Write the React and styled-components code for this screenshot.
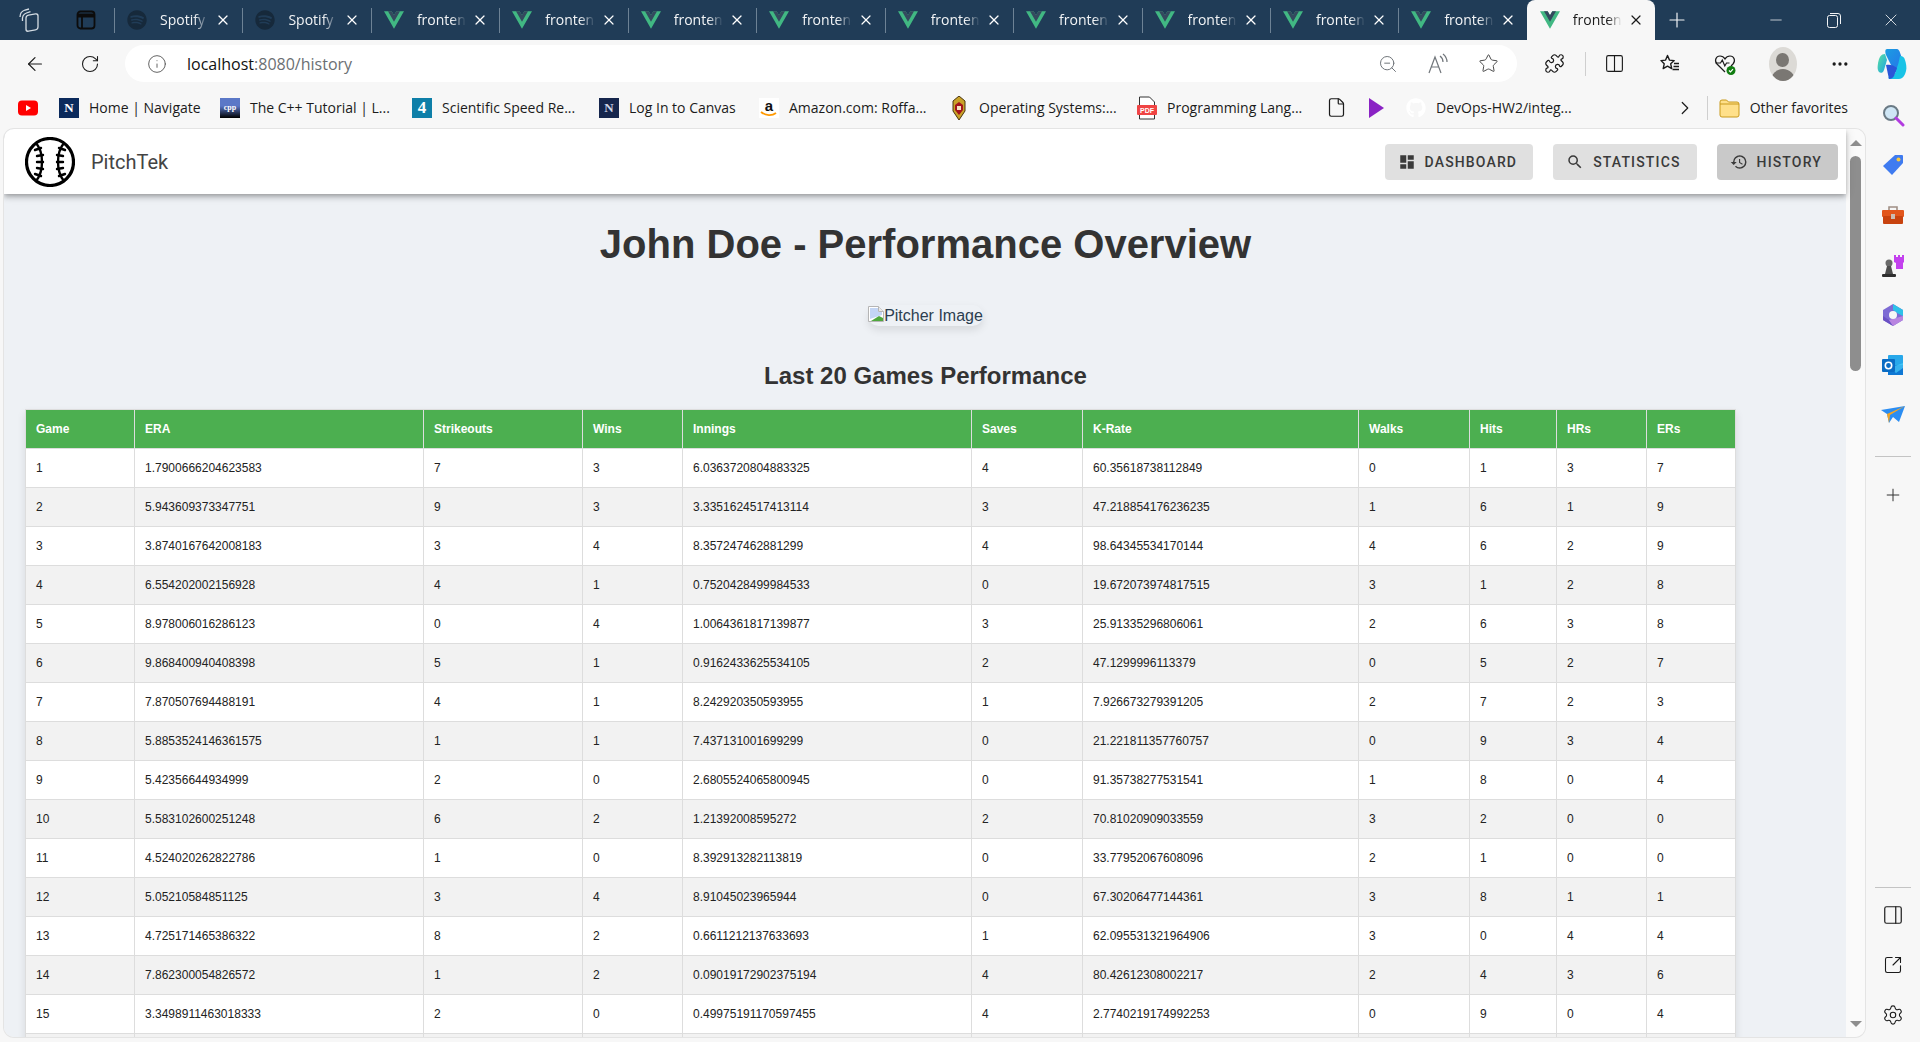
import styled, { createGlobalStyle } from "styled-components";
import { FaSpotify, FaGithub } from "react-icons/fa";
import { MdDashboard, MdSearch, MdHistory } from "react-icons/md";
import {
  ArrowLeft,
  RotateCw,
  Info,
  ZoomOut,
  Star,
  Puzzle,
  Columns2,
  Ellipsis,
  X,
  Plus,
  Minus,
  ChevronRight,
  File,
  PanelRight,
  SquareArrowOutUpRight,
  Settings,
} from "lucide-react";

const GlobalStyle = createGlobalStyle`
  html, body {
    margin: 0;
    padding: 0;
    height: 100%;
    overflow: hidden;
  }
  * {
    box-sizing: border-box;
  }
`;

const Browser = styled.div`
  width: 100vw;
  height: 100vh;
  display: flex;
  flex-direction: column;
  overflow: hidden;
  background-color: #f7f7f7;
  font-family: "Open Sans", sans-serif;
  color: #1b1b1b;
`;

const TabStrip = styled.div`
  height: 40px;
  flex: none;
  display: flex;
  align-items: stretch;
  background-color: #203c57;
`;

const StripIcon = styled.div`
  width: 57px;
  display: flex;
  align-items: center;
  justify-content: center;
`;

const Tab = styled.div`
  width: 128.45px;
  flex: none;
  display: flex;
  align-items: center;
  gap: 13px;
  padding: 0 11px 1px 13px;
  color: #f2f4f6;
  position: relative;

  &::before {
    content: "";
    position: absolute;
    left: 0;
    top: 8px;
    bottom: 7px;
    width: 1px;
    background-color: #6d8295;
  }
`;

const TabTitle = styled.span`
  flex: 1;
  margin-right: -7px;
  overflow: hidden;
  white-space: nowrap;
  font-size: 14px;
  -webkit-mask-image: linear-gradient(to right, #000 70%, transparent 100%);
  mask-image: linear-gradient(to right, #000 70%, transparent 100%);
`;

const ActiveTab = styled(Tab)`
  background-color: #f7f7f7;
  color: #1b1b1b;
  border-radius: 8px 8px 0 0;

  &::before {
    display: none;
  }
`;

const NewTab = styled.div`
  width: 44px;
  display: flex;
  align-items: center;
  justify-content: center;
`;

const WindowButtons = styled.div`
  margin-left: auto;
  display: flex;
`;

const WindowButton = styled.div`
  width: 57.5px;
  display: flex;
  align-items: center;
  justify-content: center;
`;

const Toolbar = styled.div`
  height: 45px;
  flex: none;
  display: flex;
  align-items: center;
  padding: 5px 0 3px 7.5px;
`;

const ToolSlot = styled.div`
  width: ${(props) => props.$width || 55}px;
  height: 37px;
  flex: none;
  display: flex;
  align-items: center;
  justify-content: center;
`;

const AddressBar = styled.div`
  width: 1392px;
  height: 37px;
  flex: none;
  margin-left: 7.5px;
  display: flex;
  align-items: center;
  padding: 0 18px 0 22px;
  border-radius: 19px;
  background-color: #fff;
`;

const Url = styled.div`
  margin-left: 20px;
  font-size: 16px;
  color: #111;

  span {
    color: #6b6f73;
  }
`;

const AddressTools = styled.div`
  margin-left: auto;
  display: flex;
  align-items: center;
  gap: 29px;
`;

const ToolGroup = styled.div`
  margin-left: 9.5px;
  display: flex;
  align-items: center;
`;

const ToolDivider = styled.div`
  width: 1px;
  height: 24px;
  flex: none;
  background-color: #cfcfcf;
`;

const ToolbarDivider = styled(ToolDivider)`
  margin: 0 1px 0 3.5px;
`;

const Avatar = styled.div`
  width: 28px;
  height: 34px;
  border-radius: 50%;
  overflow: hidden;
  background-color: #dcdad6;
  display: flex;
  flex-direction: column;
  align-items: center;
`;

const AvatarHead = styled.div`
  width: 13px;
  height: 15px;
  margin-top: 6px;
  border-radius: 50%;
  background-color: #7a7773;
`;

const AvatarBody = styled.div`
  width: 24px;
  height: 12px;
  margin-top: 2px;
  border-radius: 12px 12px 0 0;
  background-color: #7a7773;
`;

const Below = styled.div`
  flex: 1;
  min-height: 0;
  display: flex;
`;

const MainColumn = styled.div`
  width: 1866px;
  flex: none;
  display: flex;
  flex-direction: column;
`;

const Bookmarks = styled.div`
  height: 44px;
  flex: none;
  display: flex;
  align-items: center;
  gap: 21px;
  padding: 1px 18px 0 18px;
  font-size: 14px;
`;

const Bookmark = styled.div`
  display: flex;
  align-items: center;
  gap: 10px;
  white-space: nowrap;
`;

const BookmarkTitle = styled.span`
  width: ${(props) => (props.$width ? `${props.$width}px` : "auto")};
`;

const BookmarksEnd = styled.div`
  margin-left: auto;
  display: flex;
  align-items: center;
  gap: 11px;
`;

const Favicon = styled.div`
  width: 20px;
  height: 20px;
  flex: none;
  display: flex;
  flex-direction: column;
  align-items: center;
  justify-content: center;
  background: ${(props) => props.$bg};
  color: ${(props) => props.$color};
  font-family: "Liberation Serif", serif;
  font-size: ${(props) => props.$size}px;
  font-weight: 700;
  line-height: 1;
`;

const AmazonLetter = styled.span`
  font-family: "Liberation Sans", sans-serif;
  margin-bottom: -2px;
`;

const Workspace = styled.div`
  flex: 1;
  min-height: 0;
  display: flex;
  padding: 0 0 5px 4px;
`;

const WebView = styled.div`
  width: 1861px;
  flex: none;
  display: flex;
  overflow: hidden;
  border-radius: 10px;
  box-shadow: 0 0 0 1px #e4e4e4;
`;

const Page = styled.div`
  width: 1842px;
  flex: none;
  display: flex;
  flex-direction: column;
  background-color: #eef1f5;
`;

const AppBar = styled.header`
  height: 65px;
  flex: none;
  display: flex;
  align-items: center;
  justify-content: space-between;
  padding: 0 8px 0 21px;
  background-color: #fff;
  position: relative;
  box-shadow: 0 2px 4px -1px rgba(0, 0, 0, 0.2), 0 4px 5px rgba(0, 0, 0, 0.14),
    0 1px 10px rgba(0, 0, 0, 0.12);
`;

const Brand = styled.div`
  display: flex;
  align-items: center;
  gap: 16px;
`;

const BrandName = styled.div`
  font-family: Roboto, sans-serif;
  font-size: 20px;
  color: #444;
`;

const Nav = styled.nav`
  display: flex;
  gap: 20px;
`;

const NavButton = styled.button`
  height: 36px;
  display: flex;
  align-items: center;
  gap: 9px;
  padding: 0 16px 0 13px;
  border: none;
  border-radius: 4px;
  background-color: ${(props) => (props.$active ? "#c9c9c9" : "#e0e0e0")};
  color: #3a3a3a;
  font-family: Roboto, sans-serif;
  font-size: 14px;
  font-weight: 500;
  letter-spacing: 1.15px;
  text-transform: uppercase;
`;

const Content = styled.main`
  flex: 1;
  min-height: 0;
  display: flex;
  flex-direction: column;
  align-items: center;
  padding: 27px 20px 0 21px;
  overflow: hidden;
  font-family: "Liberation Sans", Arial, sans-serif;
`;

const Title = styled.h1`
  margin: 0 0 38px;
  font-size: 40px;
  line-height: 46px;
  font-weight: 700;
  color: #333;
`;

const PitcherImage = styled.div`
  display: flex;
  align-items: flex-start;
  height: 24px;
  padding-top: 1px;
  border-radius: 12px;
  font-size: 16px;
  line-height: 20px;
  color: #2c3e50;
  box-shadow: 0 4px 8px rgba(0, 0, 0, 0.1);
`;

const SubTitle = styled.h2`
  margin: 36px 0 20px;
  font-size: 24px;
  line-height: 27px;
  font-weight: 700;
  color: #333;
`;

const GamesTable = styled.table`
  width: 1710px;
  flex: none;
  align-self: flex-start;
  table-layout: fixed;
  border-collapse: collapse;
  font-size: 12px;
  background-color: #fff;
  box-shadow: 0 4px 8px rgba(0, 0, 0, 0.1);

  th,
  td {
    padding: 12px 10px;
    line-height: 14px;
    text-align: left;
    border: 1px solid #ddd;
    color: #222;
  }

  th {
    background-color: #4caf50;
    color: #fff;
    font-weight: 700;
  }

  tbody tr:nth-child(even) td {
    background-color: #f2f2f2;
  }
`;

const GameCol = styled.col`
  width: ${(props) => props.$width}px;
`;

const ScrollTrack = styled.div`
  width: 19px;
  flex: none;
  display: flex;
  flex-direction: column;
  align-items: center;
  padding: 11px 0 10px;
  background-color: #fafafa;
`;

const ScrollUp = styled.div`
  width: 0;
  height: 0;
  border-left: 6px solid transparent;
  border-right: 6px solid transparent;
  border-bottom: 6px solid #8e8e8e;
`;

const ScrollThumb = styled.div`
  width: 11px;
  height: 215px;
  margin-top: 10px;
  border-radius: 6px;
  background-color: #8e8e8e;
`;

const ScrollDown = styled.div`
  margin-top: auto;
  width: 0;
  height: 0;
  border-left: 6px solid transparent;
  border-right: 6px solid transparent;
  border-top: 6px solid #8e8e8e;
`;

const Rail = styled.aside`
  flex: 1;
  display: flex;
  flex-direction: column;
  align-items: center;
  padding: 5px 0 2px;
`;

const RailGroup = styled.div`
  display: flex;
  flex-direction: column;
`;

const RailItem = styled.div`
  width: 54px;
  height: 50px;
  flex: none;
  display: flex;
  align-items: center;
  justify-content: center;
`;

const RailDivider = styled.div`
  width: 36px;
  height: 1px;
  flex: none;
  margin: 16px 0 13px;
  background-color: #c4c4c4;
`;

const RailBottomDivider = styled(RailDivider)`
  margin: 0 0 2px;
`;

const RailBottom = styled.div`
  margin-top: auto;
  display: flex;
  flex-direction: column;
  align-items: center;
`;

const columns = [
  { name: "Game", width: 109 },
  { name: "ERA", width: 289 },
  { name: "Strikeouts", width: 159 },
  { name: "Wins", width: 100 },
  { name: "Innings", width: 289 },
  { name: "Saves", width: 111 },
  { name: "K-Rate", width: 276 },
  { name: "Walks", width: 111 },
  { name: "Hits", width: 87 },
  { name: "HRs", width: 90 },
  { name: "ERs", width: 89 },
];

const games = [
  [1, "1.7900666204623583", 7, 3, "6.0363720804883325", 4, "60.35618738112849", 0, 1, 3, 7],
  [2, "5.943609373347751", 9, 3, "3.3351624517413114", 3, "47.218854176236235", 1, 6, 1, 9],
  [3, "3.8740167642008183", 3, 4, "8.357247462881299", 4, "98.64345534170144", 4, 6, 2, 9],
  [4, "6.554202002156928", 4, 1, "0.7520428499984533", 0, "19.672073974817515", 3, 1, 2, 8],
  [5, "8.978006016286123", 0, 4, "1.0064361817139877", 3, "25.91335296806061", 2, 6, 3, 8],
  [6, "9.868400940408398", 5, 1, "0.9162433625534105", 2, "47.1299996113379", 0, 5, 2, 7],
  [7, "7.870507694488191", 4, 1, "8.242920350593955", 1, "7.926673279391205", 2, 7, 2, 3],
  [8, "5.8853524146361575", 1, 1, "7.437131001699299", 0, "21.221811357760757", 0, 9, 3, 4],
  [9, "5.42356644934999", 2, 0, "2.6805524065800945", 0, "91.35738277531541", 1, 8, 0, 4],
  [10, "5.583102600251248", 6, 2, "1.21392008595272", 2, "70.81020909033559", 3, 2, 0, 0],
  [11, "4.524020262822786", 1, 0, "8.392913282113819", 0, "33.77952067608096", 2, 1, 0, 0],
  [12, "5.05210584851125", 3, 4, "8.91045023965944", 0, "67.30206477144361", 3, 8, 1, 1],
  [13, "4.725171465386322", 8, 2, "0.6611212137633693", 1, "62.095531321964906", 3, 0, 4, 4],
  [14, "7.862300054826572", 1, 2, "0.09019172902375194", 4, "80.42612308002217", 2, 4, 3, 6],
  [15, "3.3498911463018333", 2, 0, "0.49975191170597455", 4, "2.7740219174992253", 0, 9, 0, 4],
  ["", "", "", "", "", "", "", "", "", "", ""],
];

function VueLogo() {
  return (
    <svg width="20" height="18" viewBox="0 0 261.76 226.69">
      <path d="M161.096.001l-30.225 52.351L100.647.001H-.005l130.876 226.688L261.749.001z" fill="#41b883" />
      <path d="M161.096.001l-30.225 52.351L100.647.001H52.346l78.525 136.01L209.398.001z" fill="#34495e" />
    </svg>
  );
}

function WorkspacesIcon() {
  return (
    <svg width="22" height="24" viewBox="0 0 22 24" fill="none" stroke="#d5dde4" strokeWidth="1.3">
      <path d="M2 9c0-3 2-6 5-7l4-1" />
      <path d="M4.5 13c-.5-4 1-7 4-8l4-1.3" />
      <rect x="8" y="6" width="12" height="16" rx="2.5" transform="skewY(-10) translate(0 3)" />
    </svg>
  );
}

function VerticalTabsIcon() {
  return (
    <svg width="20" height="20" viewBox="0 0 20 20" fill="none" stroke="#0c0c0c" strokeWidth="1.8">
      <rect x="1.5" y="1.5" width="17" height="17" rx="3" />
      <path d="M1.5 5.5h17" strokeWidth="4" />
      <path d="M6 6v12" />
    </svg>
  );
}

function FavoritesIcon() {
  return (
    <svg width="22" height="22" viewBox="0 0 22 22" fill="none" stroke="#1b1b1b" strokeWidth="1.4" strokeLinejoin="round">
      <path d="M8.5 2.5l2 4.6 4.7.5-3.5 3.2 1 4.8-4.2-2.5-4.3 2.5 1-4.8L2 7.6l4.6-.5z" />
      <path d="M15 10.5h5M14.5 13.5h5.5M13.5 16.5h6.5" />
    </svg>
  );
}

function HealthIcon() {
  return (
    <svg width="24" height="24" viewBox="0 0 24 24" fill="none">
      <path d="M12 20 4 12C1 8.5 3 4 7 4c2.3 0 4 1.3 5 3 1-1.7 2.7-3 5-3 4 0 6 4.5 3 8l-2 2" stroke="#1b1b1b" strokeWidth="1.2" />
      <path d="M2.5 11h5l1.8-3 2.5 6 1.7-3h3" stroke="#1b1b1b" strokeWidth="1.2" />
      <circle cx="18" cy="18.5" r="4.5" fill="#107c10" />
      <path d="M16 18.5l1.5 1.5 2.5-2.8" stroke="#fff" strokeWidth="1.2" />
    </svg>
  );
}

function ReadAloudIcon() {
  return (
    <svg width="22" height="22" viewBox="0 0 22 22" fill="none" stroke="#70757a" strokeWidth="1.2">
      <path d="M2 20 8 4l6 16M4.5 14h7" />
      <path d="M13 3c2 1.5 3 3.5 3 6M16 1c2.5 2 4 4.5 4 8" />
    </svg>
  );
}

function CopilotIcon() {
  return (
    <svg width="30" height="34" viewBox="0 0 30 34">
      <defs>
        <linearGradient id="copA" x1="0" y1="0" x2="1" y2="1">
          <stop offset="0" stopColor="#1b9de2" />
          <stop offset="1" stopColor="#2870ea" />
        </linearGradient>
        <linearGradient id="copB" x1="0" y1="0" x2="1" y2="1">
          <stop offset="0" stopColor="#5be0a0" />
          <stop offset="1" stopColor="#19a3e6" />
        </linearGradient>
      </defs>
      <path d="M10 2h9c3 0 3.5 2 4.5 5l4 12c1 3-1 6-4 6h-6L9 8c-1-3-1-6 1-6z" fill="url(#copA)" />
      <path d="M8 7C4 7 2.5 10 1.5 14S0 23 2 25c1.5 1.5 4 1 5-2l3-10z" fill="url(#copB)" />
      <path d="M23 9c3 0 4 1 5 4s2 8 1 11c-1 4-3 8-7 8h-9c-2 0-2-2-.5-3 3 0 5-1 6-4l3-9z" fill="#19c3e6" />
      <path d="M9 18c3-1 8 0 11 3l-3 8c-1 2-3 3-5 3z" fill="#2a56d8" />
    </svg>
  );
}

function BaseballLogo() {
  return (
    <svg width="50" height="50" viewBox="0 0 50 50" fill="#fff" stroke="#000" strokeWidth="3.2" strokeLinecap="round">
      <ellipse cx="25" cy="25" rx="23.5" ry="23.5" />
      <path d="M11 6c5 6 6 12 6 19s-1 13-6 19" fill="none" strokeWidth="2.4" />
      <path d="M39 6c-5 6-6 12-6 19s1 13 6 19" fill="none" strokeWidth="2.4" />
      <path d="M10 13l6-2M12 19l6-1M12 25h6M12 31l6 1M10 37l6 2M40 13l-6-2M38 19l-6-1M38 25h-6M38 31l-6 1M40 37l-6 2" strokeWidth="2.4" />
    </svg>
  );
}

function BrokenImageIcon() {
  return (
    <svg width="16" height="16" viewBox="0 0 16 16">
      <path d="M0.5 0.5h10l5 5v10h-15z" fill="#fff" stroke="#b5b5b5" />
      <path d="M10.5 0.5v5h5" fill="#e8e8e8" stroke="#b5b5b5" />
      <path d="M2 2h8v4h4v3L8 11l-6 2z" fill="#c3d5f4" />
      <path d="M3 15 11 10l4 2v3z" fill="#4fa83d" />
    </svg>
  );
}

function FolderIcon() {
  return (
    <svg width="21" height="20" viewBox="0 0 21 20">
      <path d="M1 4a2 2 0 0 1 2-2h4.5l2 2H18a2 2 0 0 1 2 2v11a2 2 0 0 1-2 2H3a2 2 0 0 1-2-2z" fill="#ffe08a" stroke="#c99a1c" />
      <path d="M1 6h19" stroke="#c99a1c" />
    </svg>
  );
}

function YoutubeIcon() {
  return (
    <svg width="20" height="16" viewBox="0 0 20 16">
      <rect width="20" height="15" y="0.5" rx="4" fill="#f00" />
      <path d="M8 5l5 3-5 3z" fill="#fff" />
    </svg>
  );
}

function AmazonIcon() {
  return (
    <Favicon $bg="#fff" $color="#111" $size={15}>
      <AmazonLetter>a</AmazonLetter>
      <svg width="20" height="6" viewBox="0 0 20 6">
        <path d="M2 1c5 4 11 4 15 1" fill="none" stroke="#f90" strokeWidth="1.8" />
      </svg>
    </Favicon>
  );
}

function CrestIcon() {
  return (
    <svg width="20" height="24" viewBox="-3 0 20 24">
      <path d="M7 0l6 5v10l-6 9-6-9V5z" fill="#c9a227" stroke="#4a3410" />
      <path d="M7 6l4 3v5l-4 5-4-5V9z" fill="#a3141c" />
      <path d="M5 10h4v4H5z" fill="#f4e4c1" />
    </svg>
  );
}

function PdfIcon() {
  return (
    <svg width="20" height="24" viewBox="0 0 20 24">
      <path d="M2.5 1h10l5 5v17h-15z" fill="#fff" stroke="#333" />
      <rect y="9" width="20" height="10" rx="1" fill="#ef4444" />
      <text x="10" y="17" textAnchor="middle" fontSize="7" fontWeight="700" fontFamily="Liberation Sans, sans-serif" fill="#fff">PDF</text>
    </svg>
  );
}

function PlayIcon() {
  return (
    <svg width="17" height="20" viewBox="0 0 17 20">
      <path d="M1 0l15 10L1 20z" fill="#8a22c4" />
    </svg>
  );
}

function SearchAppIcon() {
  return (
    <svg width="24" height="24" viewBox="0 0 24 24">
      <circle cx="10" cy="10" r="7" fill="#cfe6f5" stroke="#6a7a85" strokeWidth="2" />
      <path d="M15 15l7 7" stroke="#b23be0" strokeWidth="3" strokeLinecap="round" />
    </svg>
  );
}

function TagIcon() {
  return (
    <svg width="24" height="24" viewBox="0 0 24 24">
      <path d="M14 2h7a1 1 0 0 1 1 1v7L11 22 2 13z" fill="#3f7bf0" />
      <circle cx="17.5" cy="6.5" r="2" fill="#f5c842" />
    </svg>
  );
}

function ToolboxIcon() {
  return (
    <svg width="24" height="20" viewBox="0 0 24 20">
      <path d="M8 5V2h8v3" fill="none" stroke="#a08f85" strokeWidth="1.6" />
      <rect x="1" y="5" width="22" height="7" rx="1" fill="#e2561c" />
      <rect x="2" y="11" width="20" height="8" rx="1" fill="#c8430f" />
      <rect x="10" y="9" width="4" height="5" fill="#cbbdb2" />
    </svg>
  );
}

function ChessIcon() {
  return (
    <svg width="24" height="24" viewBox="0 0 24 24">
      <path d="M14 2h2v2h2V2h2v2h2V2h2v7l-1 1v6h-7v-6l-2-1z" fill="#c341ee" transform="translate(-1 0)" />
      <circle cx="8" cy="10" r="3.5" fill="#6a6a6a" />
      <path d="M6 13h4l2 8H4z" fill="#4d4d4d" />
      <rect x="1" y="21" width="14" height="3" rx="1" fill="#2f2f2f" />
    </svg>
  );
}

function HexIcon() {
  return (
    <svg width="22" height="24" viewBox="0 0 22 24">
      <path d="M11 1l10 6v10l-10 6-10-6V7z" fill="#7d6bd4" />
      <path d="M11 1l10 6v6l-6-3-4-3z" fill="#2ec1e8" />
      <path d="M1 13l6 4 4 6-10-6z" fill="#6a51c4" />
      <path d="M21 13v4l-10 6-4-6z" fill="#b884e0" />
      <circle cx="11" cy="12" r="4" fill="#f7f7f7" />
    </svg>
  );
}

function OutlookIcon() {
  return (
    <svg width="22" height="22" viewBox="0 0 22 22">
      <rect x="6" y="1" width="15" height="20" rx="1" fill="#28a8ea" />
      <path d="M6 12l15-1v10H6z" fill="#0f78d4" />
      <path d="M8 14l13-5v5l-7 5z" fill="#50d9ff" opacity="0.6" />
      <rect x="0" y="5" width="13" height="13" rx="1" fill="#0a6cc4" />
      <circle cx="6.5" cy="11.5" r="3.2" fill="none" stroke="#fff" strokeWidth="1.6" />
    </svg>
  );
}

function SendIcon() {
  return (
    <svg width="24" height="18" viewBox="0 0 24 18">
      <path d="M0 4l24-4-6 16-6-5-4 6-2-9z" fill="#2b8df2" />
      <path d="M6 8 24 0 9 9l-1 8z" fill="#f5a623" />
    </svg>
  );
}

const tabs = [
  { title: "Spotify", spotify: true },
  { title: "Spotify", spotify: true },
  ...Array.from({ length: 9 }, () => ({ title: "frontend" })),
];

const bookmarks = [
  { key: "yt", icon: <YoutubeIcon /> },
  { key: "home", title: "Home | Navigate", width: 110, icon: <Favicon $bg="#0b2a5c" $color="#fff" $size={13}>N</Favicon> },
  { key: "cpp", title: "The C++ Tutorial | L...", width: 141, icon: <Favicon $bg="linear-gradient(#5b78c7 40%, #000)" $color="#fff" $size={8}>cpp</Favicon> },
  { key: "speed", title: "Scientific Speed Re...", width: 136, icon: <Favicon $bg="#0e7fa8" $color="#fff" $size={17}>4</Favicon> },
  { key: "canvas", title: "Log In to Canvas", width: 109, icon: <Favicon $bg="#16264d" $color="#cfd6e6" $size={13}>N</Favicon> },
  { key: "amazon", title: "Amazon.com: Roffa...", width: 139, icon: <AmazonIcon /> },
  { key: "os", title: "Operating Systems:...", width: 137, icon: <CrestIcon /> },
  { key: "pdf", title: "Programming Lang...", width: 138, icon: <PdfIcon /> },
  { key: "file", icon: <File size={21} strokeWidth={1.4} color="#1b1b1b" /> },
  { key: "play", icon: <PlayIcon /> },
  { key: "gh", title: "DevOps-HW2/integ...", width: 141, icon: <FaGithub size={20} color="#fff" /> },
];

const railTop = [
  <SearchAppIcon key="search" />,
  <TagIcon key="tag" />,
  <ToolboxIcon key="toolbox" />,
  <ChessIcon key="chess" />,
  <HexIcon key="hex" />,
  <OutlookIcon key="outlook" />,
  <SendIcon key="send" />,
];

export default function App() {
  return (
    <>
      <GlobalStyle />
      <Browser>
        <TabStrip>
          <StripIcon>
            <WorkspacesIcon />
          </StripIcon>
          <StripIcon>
            <VerticalTabsIcon />
          </StripIcon>
          {tabs.map((tab, i) => (
            <Tab key={i}>
              {tab.spotify ? <FaSpotify size={20} color="#16293b" /> : <VueLogo />}
              <TabTitle>{tab.title}</TabTitle>
              <X size={16} strokeWidth={1.8} color="#fff" />
            </Tab>
          ))}
          <ActiveTab>
            <VueLogo />
            <TabTitle>frontend</TabTitle>
            <X size={16} strokeWidth={1.8} color="#1b1b1b" />
          </ActiveTab>
          <NewTab>
            <Plus size={24} strokeWidth={1.2} color="#f2f4f6" />
          </NewTab>
          <WindowButtons>
            <WindowButton>
              <Minus size={18} strokeWidth={1} color="#f2f4f6" />
            </WindowButton>
            <WindowButton>
              <svg width="14" height="15" viewBox="0 0 14 15" fill="none" stroke="#f2f4f6">
                <rect x="0.5" y="2.5" width="10" height="12" rx="2" />
                <path d="M3 .5h8a2.5 2.5 0 0 1 2.5 2.5v8" />
              </svg>
            </WindowButton>
            <WindowButton>
              <X size={20} strokeWidth={1} color="#f2f4f6" />
            </WindowButton>
          </WindowButtons>
        </TabStrip>

        <Toolbar>
          <ToolSlot>
            <ArrowLeft size={22} strokeWidth={1.3} color="#1b1b1b" />
          </ToolSlot>
          <ToolSlot>
            <RotateCw size={20} strokeWidth={1.3} color="#1b1b1b" />
          </ToolSlot>
          <AddressBar>
            <Info size={20} strokeWidth={1.1} color="#555" />
            <Url>
              localhost<span>:8080/history</span>
            </Url>
            <AddressTools>
              <ZoomOut size={20} strokeWidth={1.2} color="#70757a" />
              <ReadAloudIcon />
              <Star size={21} strokeWidth={1.1} color="#444" />
            </AddressTools>
          </AddressBar>
          <ToolGroup>
            <ToolSlot>
              <Puzzle size={21} strokeWidth={1.4} color="#1b1b1b" />
            </ToolSlot>
            <ToolbarDivider />
            <ToolSlot>
              <Columns2 size={21} strokeWidth={1.3} color="#1b1b1b" />
            </ToolSlot>
            <ToolSlot>
              <FavoritesIcon />
            </ToolSlot>
            <ToolSlot>
              <HealthIcon />
            </ToolSlot>
            <ToolSlot $width={61}>
              <Avatar>
                <AvatarHead />
                <AvatarBody />
              </Avatar>
            </ToolSlot>
            <ToolSlot $width={53}>
              <Ellipsis size={20} strokeWidth={2} color="#1b1b1b" />
            </ToolSlot>
            <ToolSlot $width={51}>
              <CopilotIcon />
            </ToolSlot>
          </ToolGroup>
        </Toolbar>

        <Below>
          <MainColumn>
            <Bookmarks>
              {bookmarks.map((mark) => (
                <Bookmark key={mark.key}>
                  {mark.icon}
                  {mark.title && <BookmarkTitle $width={mark.width}>{mark.title}</BookmarkTitle>}
                </Bookmark>
              ))}
              <BookmarksEnd>
                <ChevronRight size={22} strokeWidth={1.3} color="#1b1b1b" />
                <ToolDivider />
                <Bookmark>
                  <FolderIcon />
                  <BookmarkTitle>Other favorites</BookmarkTitle>
                </Bookmark>
              </BookmarksEnd>
            </Bookmarks>

            <Workspace>
              <WebView>
                <Page>
                  <AppBar>
                    <Brand>
                      <BaseballLogo />
                      <BrandName>PitchTek</BrandName>
                    </Brand>
                    <Nav>
                      <NavButton>
                        <MdDashboard size={18} />
                        Dashboard
                      </NavButton>
                      <NavButton>
                        <MdSearch size={18} />
                        Statistics
                      </NavButton>
                      <NavButton $active>
                        <MdHistory size={18} />
                        History
                      </NavButton>
                    </Nav>
                  </AppBar>
                  <Content>
                    <Title>John Doe - Performance Overview</Title>
                    <PitcherImage>
                      <BrokenImageIcon />
                      Pitcher Image
                    </PitcherImage>
                    <SubTitle>Last 20 Games Performance</SubTitle>
                    <GamesTable>
                      <colgroup>
                        {columns.map((col) => (
                          <GameCol key={col.name} $width={col.width} />
                        ))}
                      </colgroup>
                      <thead>
                        <tr>
                          {columns.map((col) => (
                            <th key={col.name}>{col.name}</th>
                          ))}
                        </tr>
                      </thead>
                      <tbody>
                        {games.map((game, i) => (
                          <tr key={i}>
                            {game.map((value, j) => (
                              <td key={j}>{value === "" ? "\u00a0" : value}</td>
                            ))}
                          </tr>
                        ))}
                      </tbody>
                    </GamesTable>
                  </Content>
                </Page>
                <ScrollTrack>
                  <ScrollUp />
                  <ScrollThumb />
                  <ScrollDown />
                </ScrollTrack>
              </WebView>
            </Workspace>
          </MainColumn>

          <Rail>
            <RailGroup>
              {railTop.map((icon) => (
                <RailItem key={icon.key}>{icon}</RailItem>
              ))}
            </RailGroup>
            <RailDivider />
            <RailItem>
              <Plus size={20} strokeWidth={1.2} color="#333" />
            </RailItem>
            <RailBottom>
              <RailBottomDivider />
              <RailItem>
                <PanelRight size={22} strokeWidth={1.3} color="#1b1b1b" />
              </RailItem>
              <RailItem>
                <SquareArrowOutUpRight size={20} strokeWidth={1.3} color="#1b1b1b" />
              </RailItem>
              <RailItem>
                <Settings size={22} strokeWidth={1.2} color="#1b1b1b" />
              </RailItem>
            </RailBottom>
          </Rail>
        </Below>
      </Browser>
    </>
  );
}
